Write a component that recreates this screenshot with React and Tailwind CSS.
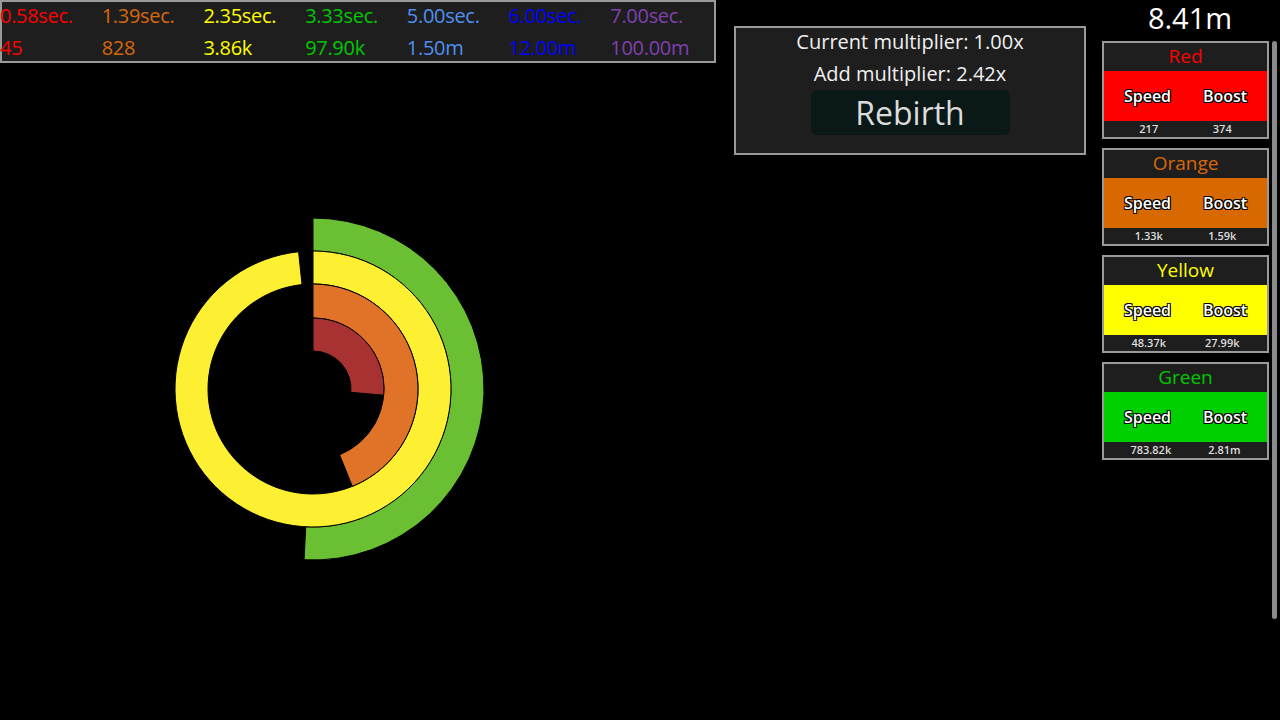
const tiers = [
  { t: "0.58sec.", v: "45", c: "text-[#ff0000]" },
  { t: "1.39sec.", v: "828", c: "text-[#d9680a]" },
  { t: "2.35sec.", v: "3.86k", c: "text-[#ffff00]" },
  { t: "3.33sec.", v: "97.90k", c: "text-[#00c800]" },
  { t: "5.00sec.", v: "1.50m", c: "text-[#5090f0]" },
  { t: "6.00sec.", v: "12.00m", c: "text-[#0000ff]" },
  { t: "7.00sec.", v: "100.00m", c: "text-[#8040b0]" },
];

const cards = [
  { name: "Red", title: "text-[#ff0000]", band: "bg-[#ff0000]", s: "217", b: "374" },
  { name: "Orange", title: "text-[#d9680a]", band: "bg-[#d86800]", s: "1.33k", b: "1.59k" },
  { name: "Yellow", title: "text-[#ffff00]", band: "bg-[#ffff00]", s: "48.37k", b: "27.99k" },
  { name: "Green", title: "text-[#00c800]", band: "bg-[#00d000]", s: "783.82k", b: "2.81m" },
];

const outline = { textShadow: "-1px -1px 0 #000,1px -1px 0 #000,-1px 1px 0 #000,1px 1px 0 #000" };

function arc(cx, cy, r0, r1, deg) {
  const p = (r, a) => {
    const rad = ((a - 90) * Math.PI) / 180;
    return [cx + r * Math.cos(rad), cy + r * Math.sin(rad)];
  };
  const large = deg > 180 ? 1 : 0;
  const [ax, ay] = p(r1, 0);
  const [bx, by] = p(r1, deg);
  const [cx2, cy2] = p(r0, deg);
  const [dx, dy] = p(r0, 0);
  return `M${ax} ${ay} A${r1} ${r1} 0 ${large} 1 ${bx} ${by} L${cx2} ${cy2} A${r0} ${r0} 0 ${large} 0 ${dx} ${dy} Z`;
}

const panel = "bg-[#1e1e1e] border-2 border-[#9a9a9a]";

export default function App() {
  return (
    <div className="relative w-[1280px] h-[720px] bg-black overflow-hidden" style={{ fontFamily: "'Open Sans', 'Noto Sans', sans-serif" }}>
      <div className={`absolute left-0 top-0 w-[716px] h-[63px] ${panel} grid grid-cols-7 content-center gap-y-[6px] text-[20px] leading-[26px] tracking-[-0.3px]`}>
        {tiers.map((x) => (
          <div key={x.t} className={`${x.c} whitespace-nowrap -ml-[2px]`}>{x.t}</div>
        ))}
        {tiers.map((x) => (
          <div key={x.v} className={`${x.c} whitespace-nowrap -ml-[2px]`}>{x.v}</div>
        ))}
      </div>

      <svg className="absolute left-0 top-0" width="720" height="720">
        <path d={arc(313, 389, 138, 171, 183)} fill="#6bbf33" stroke="#000" strokeWidth="1" />
        <path d={arc(313, 389, 105, 138, 354)} fill="#fdf033" stroke="#000" strokeWidth="1" />
        <path d={arc(313, 389, 71, 105, 158)} fill="#e07328" stroke="#000" strokeWidth="1" />
        <path d={arc(313, 389, 38, 71, 95)} fill="#a83232" stroke="#000" strokeWidth="1" />
      </svg>

      <div className={`absolute left-[734px] top-[26px] w-[352px] h-[129px] ${panel} flex flex-col items-center text-[#f0f0f0]`}>
        <div className="text-[20px] leading-[28px]">Current multiplier: 1.00x</div>
        <div className="text-[20px] mt-[4px] leading-[28px]">Add multiplier: 2.42x</div>
        <div className="mt-[2px] w-[199px] h-[45px] bg-[#0b1818] rounded-md flex items-center justify-center text-[32px] text-[#dcdcdc]">Rebirth</div>
      </div>

      <div className="absolute left-[1100px] top-0 w-[180px] h-[720px] flex flex-col items-center">
        <div className="text-white text-[29px] leading-[36px] h-[36px] w-[170px] text-center">8.41m</div>
        <div className="relative w-full flex">
          <div className="flex flex-col gap-[9px] mt-[5px] ml-[2px]">
            {cards.map((c) => (
              <div key={c.name} className={`w-[167px] h-[98px] ${panel} flex flex-col`}>
                <div className={`h-[28px] text-center text-[19px] leading-[26px] ${c.title}`}>{c.name}</div>
                <div className={`h-[50px] ${c.band} flex items-center justify-around text-white text-[16px] font-semibold px-1`} style={outline}>
                  <span>Speed</span>
                  <span>Boost</span>
                </div>
                <div className="flex-1 flex items-center justify-around text-[#ddd] text-[11px] font-semibold px-2">
                  <span>{c.s}</span>
                  <span>{c.b}</span>
                </div>
              </div>
            ))}
          </div>
          <div className="ml-auto mr-[3px] mt-[5px] w-[5px] h-[578px] rounded bg-[#8a8a8a]" />
        </div>
      </div>
    </div>
  );
}
